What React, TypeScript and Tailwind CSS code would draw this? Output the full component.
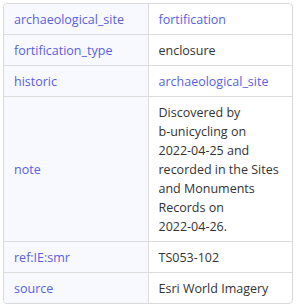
const note = [
  "Discovered by",
  "b-unicycling on",
  "2022-04-25 and",
  "recorded in the Sites",
  "and Monuments",
  "Records on",
  "2022-04-26.",
];

const rows: { k: string; v: React.ReactNode; link?: boolean }[] = [
  { k: "archaeological_site", v: "fortification", link: true },
  { k: "fortification_type", v: "enclosure" },
  { k: "historic", v: "archaeological_site", link: true },
  {
    k: "note",
    v: note.map((l, i) => (
      <span key={i} className="block whitespace-nowrap">
        {l}
      </span>
    )),
  },
  { k: "ref:IE:smr", v: "TS053-102" },
  { k: "source", v: "Esri World Imagery" },
];

export default function App() {
  return (
    <div className="w-[300px] h-[306px] bg-white p-[3px] font-['Open_Sans',sans-serif] text-[12.5px] leading-[19px] text-[#333]">
      <div className="w-[290px] border border-[#d9d9d9] rounded-[4px] overflow-hidden">
        <table className="w-full border-collapse table-fixed">
          <tbody>
            {rows.map((r, i) => (
              <tr key={r.k} className={i > 0 ? "border-t border-[#dcdcdc]" : ""}>
                <td className="w-1/2 bg-[#f8f9ff] text-[#5a5fe0] px-[10px] py-[5.5px] align-middle border-r border-[#dcdcdc]">
                  {r.k}
                </td>
                <td className={"px-[10px] py-[5.5px] align-middle " + (r.link ? "text-[#5a5fe0]" : "text-[#333]")}>
                  {r.v}
                </td>
              </tr>
            ))}
          </tbody>
        </table>
      </div>
    </div>
  );
}
